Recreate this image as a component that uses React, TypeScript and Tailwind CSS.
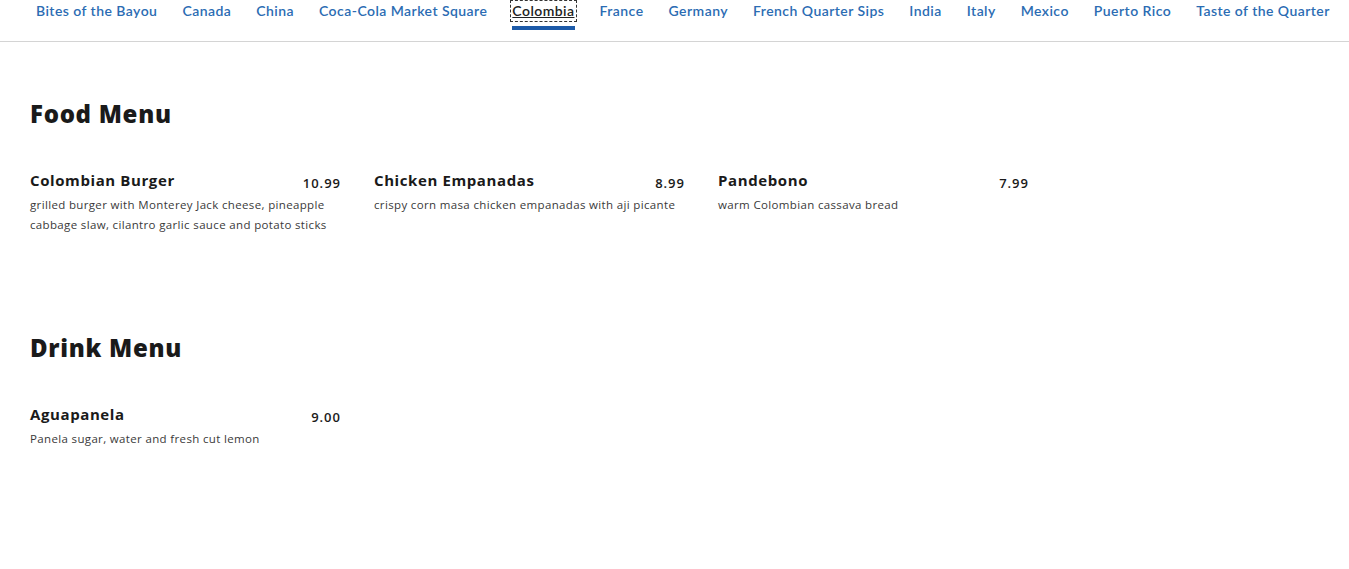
import React from "react";

const tabs = [
  "Bites of the Bayou",
  "Canada",
  "China",
  "Coca-Cola Market Square",
  "Colombia",
  "France",
  "Germany",
  "French Quarter Sips",
  "India",
  "Italy",
  "Mexico",
  "Puerto Rico",
  "Taste of the Quarter",
];

type Item = { name: string; price: string; desc: string };

const food: Item[] = [
  {
    name: "Colombian Burger",
    price: "10.99",
    desc: "grilled burger with Monterey Jack cheese, pineapple cabbage slaw, cilantro garlic sauce and potato sticks",
  },
  {
    name: "Chicken Empanadas",
    price: "8.99",
    desc: "crispy corn masa chicken empanadas with aji picante",
  },
  { name: "Pandebono", price: "7.99", desc: "warm Colombian cassava bread" },
];

const drinks: Item[] = [
  { name: "Aguapanela", price: "9.00", desc: "Panela sugar, water and fresh cut lemon" },
];

function MenuItem({ item }: { item: Item }) {
  return (
    <div className="w-[311px]">
      <div className="flex items-baseline justify-between">
        <span className="text-[15px] font-bold leading-[22px] text-[#1a1a1a] tracking-[0.6px]">{item.name}</span>
        <span className="relative top-[2px] text-[13px] font-semibold leading-[22px] text-[#1a1a1a] tracking-[1px]">
          {item.price}
        </span>
      </div>
      <p className="mt-[3px] text-[11.5px] leading-[20px] text-[#3a3a3a] tracking-[0.35px]">{item.desc}</p>
    </div>
  );
}

function Section({ title, items }: { title: string; items: Item[] }) {
  return (
    <section>
      <h2 className="text-[24px] font-extrabold leading-[30px] text-[#1a1a1a] tracking-[0.7px]">{title}</h2>
      <div className="mt-[40px] flex gap-[33px]">
        {items.map((it) => (
          <MenuItem key={it.name} item={it} />
        ))}
      </div>
    </section>
  );
}

export default function App() {
  return (
    <div className="min-h-[569px] bg-white" style={{ fontFamily: "'Open Sans', Lato, sans-serif" }}>
      <nav className="border-b border-[#d4d4d4]" style={{ fontFamily: "Lato, sans-serif" }}>
        <ul className="flex h-[41px] items-start gap-[25px] pl-[36px] whitespace-nowrap">
          {tabs.map((t) => {
            const active = t === "Colombia";
            return (
              <li key={t} className="relative">
                <span
                  className={
                    "block text-[14px] font-semibold leading-[22px] tracking-[0.45px] " +
                    (active
                      ? "-mx-[2px] px-[2px] text-[#222] underline outline-1 outline-dashed outline-[#333] -outline-offset-1"
                      : "text-[#2b6cb3]")
                  }
                >
                  {t}
                </span>
                {active && <span className="absolute left-0 right-0 top-[26px] h-[4px] bg-[#1c5aa8]" />}
              </li>
            );
          })}
        </ul>
      </nav>
      <div className="px-[30px] pt-[57px]">
        <Section title="Food Menu" items={food} />
        <div className="h-[98px]" />
        <Section title="Drink Menu" items={drinks} />
      </div>
    </div>
  );
}
